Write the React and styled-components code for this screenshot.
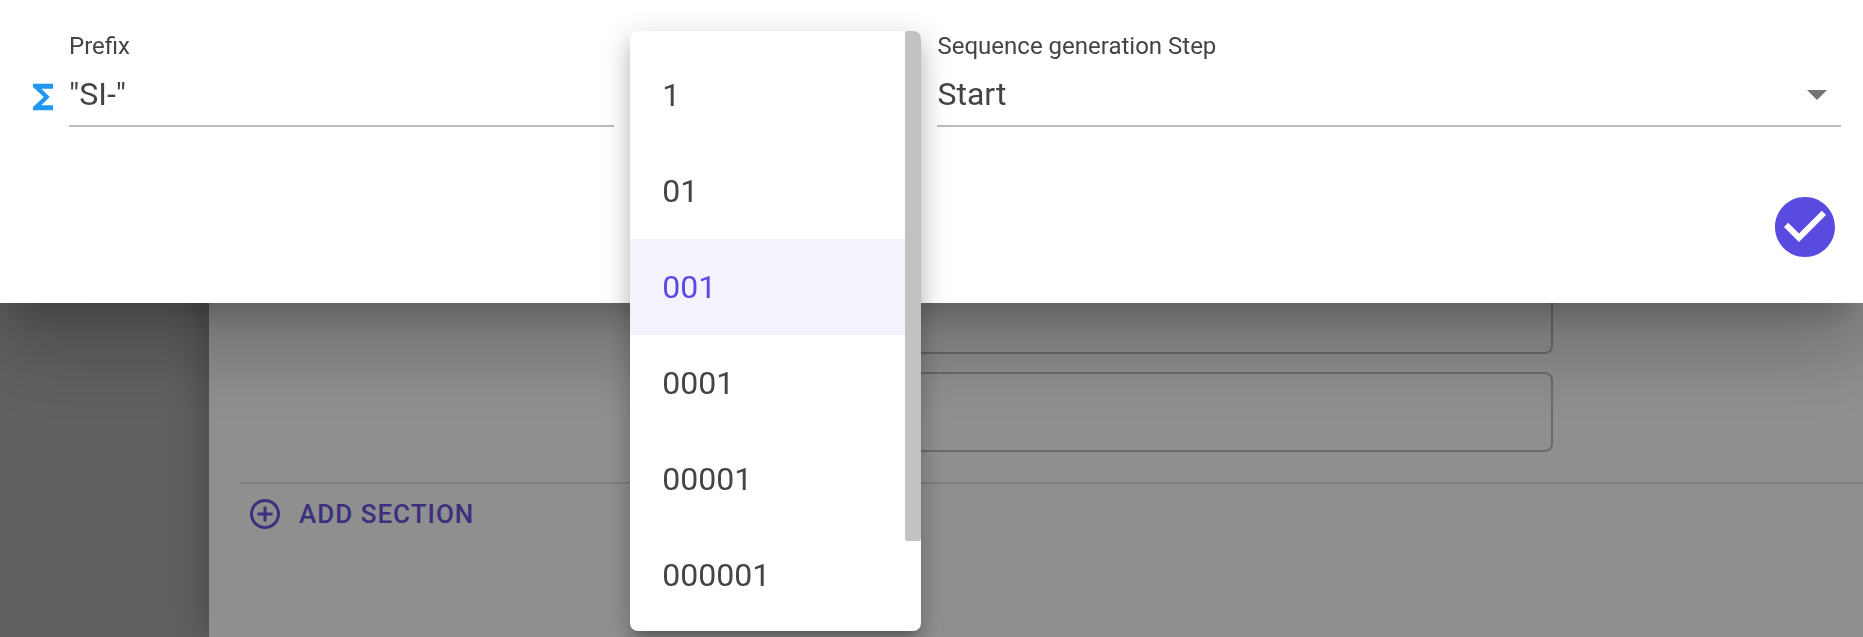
import React, { useState } from "react";
import styled, { createGlobalStyle } from "styled-components";

const GlobalStyle = createGlobalStyle`
  *, *::before, *::after { box-sizing: border-box; }
  html, body, #root { height: 100%; }
  body {
    margin: 0;
    overflow: hidden;
    background: #abafac;
    color: #444;
    font-family: Roboto, "Liberation Sans", sans-serif;
  }
  button, input, select { font: inherit; color: inherit; }
`;

const Page = styled.div`
  position: relative;
  display: flex;
  min-height: 100vh;
`;

const Rail = styled.aside`
  flex: none;
  width: 209px;
`;

const Editor = styled.main`
  flex: 1;
  display: flex;
  flex-direction: column;
  padding: 274px 0 0 32px;
  background: #fff;
  box-shadow: 0 0 36px 4px rgba(0, 0, 0, 0.28);
`;

const FormArea = styled.section`
  display: flex;
  flex-direction: column;
  gap: 18px;
  width: calc(100% - 310px);
  padding: 0 0 30px 480px;
`;

const Box = styled.input`
  width: 100%;
  height: 80px;
  padding: 0 24px;
  border: 2px solid #bdbdbd;
  border-radius: 8px;
  background: transparent;
`;

const AddBar = styled.div`
  padding: 4px 0;
  border-top: 2px solid #e0e0e0;
`;

const AddButton = styled.button`
  display: inline-flex;
  align-items: center;
  gap: 16px;
  padding: 6px;
  border: 0;
  background: none;
  color: #6a55e0;
  font-size: 26px;
  line-height: 40px;
  font-weight: 500;
  letter-spacing: 1px;
  text-transform: uppercase;
`;

const Icon = styled.svg`
  display: block;
  flex: none;
  width: ${(p) => p.$size}px;
  height: ${(p) => p.$size}px;
  fill: currentColor;
`;

const Overlay = styled.div`
  position: fixed;
  inset: 0;
  background: rgba(0, 0, 0, 0.44);
`;

const Dialog = styled.section`
  padding: 30px 22px 40px 23px;
  background: #fff;
  box-shadow: 0 22px 30px -14px rgba(0, 0, 0, 0.2),
    0 48px 76px 6px rgba(0, 0, 0, 0.14), 0 18px 92px 16px rgba(0, 0, 0, 0.12);
`;

const Fields = styled.div`
  display: grid;
  grid-template-columns: 591fr 291fr 903fr;
  gap: 16px;
`;

const FormulaCell = styled.div`
  display: flex;
  align-items: flex-end;
  gap: 6px;
`;

const FormulaMark = styled.span`
  padding-bottom: 10px;
  color: #2196f3;
`;

const Field = styled.div`
  position: relative;
  flex: 1;
  min-width: 0;
`;

const Label = styled.label`
  display: block;
  font-size: 24px;
  line-height: 32px;
`;

const Control = styled.div`
  display: flex;
  align-items: center;
  height: 65px;
  border-bottom: 2px solid #bbb;
`;

const TextInput = styled.input`
  width: 100%;
  height: 63px;
  padding: 0;
  border: 0;
  outline: 0;
  background: transparent;
  font-size: 32px;
`;

const Select = styled.select`
  flex: 1;
  height: 63px;
  padding: 0;
  border: 0;
  outline: 0;
  appearance: none;
  background: transparent;
  font-size: 32px;
`;

const Arrow = styled.span`
  margin-left: -48px;
  color: #757575;
  pointer-events: none;
`;

const Menu = styled.div`
  position: absolute;
  z-index: 2;
  top: 1px;
  left: 0;
  right: 0;
  display: flex;
  align-items: flex-start;
  overflow: hidden;
  border-radius: 8px;
  background: #fff;
  box-shadow: 0 10px 10px -6px rgba(0, 0, 0, 0.2),
    0 16px 20px 2px rgba(0, 0, 0, 0.14), 0 6px 28px 4px rgba(0, 0, 0, 0.12);
`;

const Options = styled.div`
  flex: 1;
  padding: 16px 0 8px;
`;

const Option = styled.button`
  display: block;
  width: 100%;
  height: 96px;
  padding: 0 32px;
  border: 0;
  background: ${(p) => (p.$selected ? "#f4f2fd" : "transparent")};
  color: ${(p) => (p.$selected ? "#5a4be0" : "#444")};
  font-size: 32px;
  text-align: left;
`;

const Track = styled.div`
  align-self: stretch;
  width: 16px;
`;

const Thumb = styled.div`
  height: 85%;
  border-radius: 2px;
  background: #c2c2c2;
`;

const Actions = styled.footer`
  display: flex;
  justify-content: flex-end;
  padding-top: 64px;
`;

const ConfirmButton = styled.button`
  padding: 0;
  border: 0;
  background: none;
  color: #5a4be0;
`;

const formats = ["1", "01", "001", "0001", "00001", "000001"];

export default function App() {
  const [format, setFormat] = useState("001");
  return (
    <>
      <GlobalStyle />
      <Page>
        <Rail />
        <Editor>
          <FormArea>
            <Box aria-label="First value" />
            <Box aria-label="Second value" />
          </FormArea>
          <AddBar>
            <AddButton type="button">
              <Icon $size={36} viewBox="0 0 24 24" aria-hidden="true">
                <path d="M13 7h-2v4H7v2h4v4h2v-4h4v-2h-4V7zm-1-5C6.48 2 2 6.48 2 12s4.48 10 10 10 10-4.48 10-10S17.52 2 12 2zm0 18c-4.41 0-8-3.59-8-8s3.59-8 8-8 8 3.59 8 8-3.59 8-8 8z" />
              </Icon>
              Add section
            </AddButton>
          </AddBar>
        </Editor>
      </Page>
      <Overlay>
        <Dialog role="dialog" aria-label="Sequence settings">
          <Fields>
            <FormulaCell>
              <FormulaMark>
                <Icon $size={40} viewBox="0 0 24 24" aria-hidden="true">
                  <path d="M18 4H6v2l6.5 6L6 18v2h12v-3h-7l5-5-5-5h7z" />
                </Icon>
              </FormulaMark>
              <Field>
                <Label htmlFor="prefix">Prefix</Label>
                <Control>
                  <TextInput id="prefix" defaultValue={'"SI-"'} />
                </Control>
              </Field>
            </FormulaCell>
            <Field>
              <Menu role="listbox" aria-label="Number format">
                <Options>
                  {formats.map((f) => (
                    <Option
                      key={f}
                      type="button"
                      role="option"
                      aria-selected={f === format}
                      $selected={f === format}
                      onClick={() => setFormat(f)}
                    >
                      {f}
                    </Option>
                  ))}
                </Options>
                <Track aria-hidden="true">
                  <Thumb />
                </Track>
              </Menu>
            </Field>
            <Field>
              <Label htmlFor="step">Sequence generation Step</Label>
              <Control>
                <Select id="step" defaultValue="Start">
                  <option>Start</option>
                </Select>
                <Arrow>
                  <Icon $size={48} viewBox="0 0 24 24" aria-hidden="true">
                    <path d="M7 10l5 5 5-5z" />
                  </Icon>
                </Arrow>
              </Control>
            </Field>
          </Fields>
          <Actions>
            <ConfirmButton type="button" aria-label="Confirm">
              <Icon $size={72} viewBox="0 0 24 24" aria-hidden="true">
                <path d="M12 2C6.48 2 2 6.48 2 12s4.48 10 10 10 10-4.48 10-10S17.52 2 12 2zm-2 15l-5-5 1.41-1.41L10 14.17l7.59-7.59L19 8l-9 9z" />
              </Icon>
            </ConfirmButton>
          </Actions>
        </Dialog>
      </Overlay>
    </>
  );
}
